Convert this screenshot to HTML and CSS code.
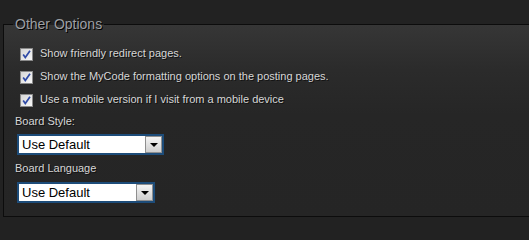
FILE: index.html
```html
<!DOCTYPE html>
<html>
<head>
<meta charset="utf-8">
<link rel="stylesheet" href="styles.css">
</head>
<body>
<fieldset class="panel">
  <legend class="legend">Other Options</legend>
  <div class="opt">
    <span class="check"><svg width="11" height="11" viewBox="0 0 11 11"><path d="M2.2 5.6 L4.3 8.6 L9 1.8" fill="none" stroke="#2f4aa6" stroke-width="1.7"/></svg></span>
    <span class="opt-text">Show friendly redirect pages.</span>
  </div>
  <div class="opt">
    <span class="check"><svg width="11" height="11" viewBox="0 0 11 11"><path d="M2.2 5.6 L4.3 8.6 L9 1.8" fill="none" stroke="#2f4aa6" stroke-width="1.7"/></svg></span>
    <span class="opt-text">Show the MyCode formatting options on the posting pages.</span>
  </div>
  <div class="opt">
    <span class="check"><svg width="11" height="11" viewBox="0 0 11 11"><path d="M2.2 5.6 L4.3 8.6 L9 1.8" fill="none" stroke="#2f4aa6" stroke-width="1.7"/></svg></span>
    <span class="opt-text">Use a mobile version if I visit from a mobile device</span>
  </div>
  <div class="label">Board Style:</div>
  <div class="select select-style">
    <span class="select-text">Use Default</span>
    <span class="select-btn"><span class="arrow"></span></span>
  </div>
  <div class="label label-lang">Board Language</div>
  <div class="select select-lang">
    <span class="select-text">Use Default</span>
    <span class="select-btn"><span class="arrow"></span></span>
  </div>
</fieldset>
</body>
</html>
```
FILE: styles.css
```css
html, body {
  margin: 0;
  padding: 0;
}
body {
  background: #222222;
  padding-top: 16px;
  font-family: "Liberation Sans", Arial, sans-serif;
}
.panel {
  margin: 0 0 0 3px;
  padding: 0 11px 13px 11px;
  border: 1px solid #0c0c0c;
  border-right: 0;
  background: linear-gradient(#363636 0px, #2b2b2b 45px, #262626 90px, #252525 100%);
  min-width: 0;
}
.legend {
  font-size: 14px;
  line-height: 16px;
  color: #9c9fa4;
  text-shadow: 1px 1px 0 #000;
  padding: 0 2px;
  margin-left: -2px;
}
.opt {
  display: flex;
  align-items: flex-start;
  height: 23px;
}
.opt:first-of-type {
  margin-top: 10px;
}
.check {
  width: 11px;
  height: 11px;
  margin: 6px 0 0 5px;
  border: 1px solid #8a8a8a;
  background: linear-gradient(135deg, #d6d6d6, #f7f7f7);
  display: flex;
  align-items: center;
  justify-content: center;
}
.check svg {
  display: block;
}
.opt-text {
  margin-left: 7px;
  font-size: 11px;
  line-height: 23px;
  color: #d6d6d6;
  text-shadow: 1px 1px 0 #111;
  white-space: nowrap;
}
.label {
  font-size: 11px;
  line-height: 20px;
  height: 20px;
  color: #d6d6d6;
  text-shadow: 1px 1px 0 #111;
}
.label-lang {
  margin-top: 3px;
}
.select {
  display: flex;
  margin: 3px 0 0 2px;
  height: 17px;
  border: 2px solid #1d4c79;
  background: #ffffff;
}
.select-style {
  width: 143px;
}
.select-lang {
  width: 134px;
  margin-top: 4px;
}
.select-text {
  flex: 1;
  font-size: 13px;
  line-height: 17px;
  color: #000;
  padding-left: 3px;
}
.select-btn {
  width: 15px;
  height: 15px;
  border: 1px solid #8f8f8f;
  background: linear-gradient(#f4f4f4, #cfcfcf);
  display: flex;
  align-items: center;
  justify-content: center;
}
.arrow {
  width: 0;
  height: 0;
  border-left: 4px solid transparent;
  border-right: 4px solid transparent;
  border-top: 4px solid #000;
  margin-top: 1px;
}
```
